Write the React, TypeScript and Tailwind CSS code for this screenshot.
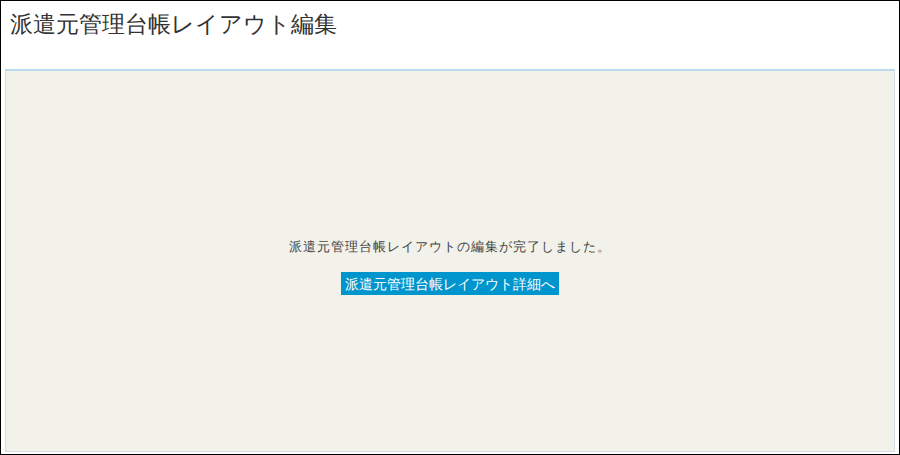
export default function App() {
  return (
    <div className="h-[455px] w-[900px] border border-black bg-white flex flex-col font-['Noto_Sans_CJK_JP',sans-serif]">
      <div className="h-[68px] shrink-0 px-[9px] pt-[6px]">
        <h1 className="text-[23px] font-light leading-[32px] text-[#333]">派遣元管理台帳レイアウト編集</h1>
      </div>
      <div className="mx-[4px] mb-[2px] flex-1 border border-[#d6dde2] border-t-2 border-t-[#bcd8ee] bg-[#f2f1ea] flex flex-col items-center justify-center">
        <p className="text-[13px] tracking-[1px] text-[#444] mt-[10px]">派遣元管理台帳レイアウトの編集が完了しました。</p>
        <button className="mt-[16px] h-[23px] px-[4px] bg-[#0095cc] text-white text-[14px] leading-[23px]">派遣元管理台帳レイアウト詳細へ</button>
      </div>
    </div>
  );
}
